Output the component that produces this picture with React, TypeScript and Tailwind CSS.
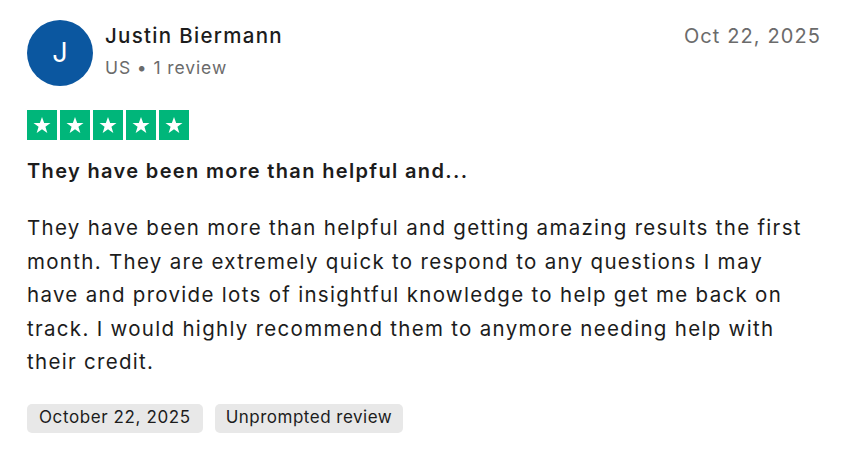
export default function App() {
  return (
    <div className="w-[842px] h-[456px] bg-white pl-[27px] pr-[21px] pt-[20px] font-['Inter',sans-serif] text-[#1c1c1c]">
      <div className="flex items-start">
        <div className="w-[66px] h-[66px] rounded-full bg-[#0b57a0] flex items-center justify-center text-white text-[27px] shrink-0">
          J
        </div>
        <div className="ml-[12px] flex-1 pt-[1px]">
          <div className="text-[20.5px] font-medium leading-[30px] tracking-[1.3px]">Justin Biermann</div>
          <div className="text-[17.5px] text-[#6b6b6b] leading-[26px] mt-[4px] tracking-[0.9px]">US • 1 review</div>
        </div>
        <div className="text-[20px] text-[#6b6b6b] leading-[30px] pt-[1px] tracking-[1.1px]">Oct 22, 2025</div>
      </div>

      <div className="flex gap-[3px] mt-[24px]">
        {[0, 1, 2, 3, 4].map((i) => (
          <div key={i} className="w-[30px] h-[30px] bg-[#00b67a] flex items-center justify-center">
            <svg viewBox="0 0 24 24" className="w-[20px] h-[20px]" fill="white">
              <path d="M12 2.5l2.6 7.2h7.6l-6.1 4.5 2.3 7.3L12 17l-6.4 4.5 2.3-7.3-6.1-4.5h7.6z" />
            </svg>
          </div>
        ))}
      </div>

      <div className="mt-[16px] text-[20px] font-semibold leading-[30px] tracking-[1.35px]">
        They have been more than helpful and...
      </div>

      <p className="mt-[25px] text-[20.5px] leading-[33.5px] tracking-[1.3px] whitespace-nowrap">
        They have been more than helpful and getting amazing results the first
        <br />
        month. They are extremely quick to respond to any questions I <span className="tracking-[1.8px]">may</span>
        <br />
        have and provide lots of insightful knowledge to help get me back on
        <br />
        track. I would highly recommend them to anymore needing help with
        <br />
        their credit.
      </p>

      <div className="flex gap-[12px] mt-[25px]">
        <span className="bg-[#e8e8e8] rounded-[5px] px-[12px] h-[29px] flex items-center text-[17px] tracking-[0.6px]">
          October 22, 2025
        </span>
        <span className="bg-[#e8e8e8] rounded-[5px] px-[11px] h-[29px] flex items-center text-[17px] tracking-[0.5px]">
          Unprompted review
        </span>
      </div>
    </div>
  );
}
